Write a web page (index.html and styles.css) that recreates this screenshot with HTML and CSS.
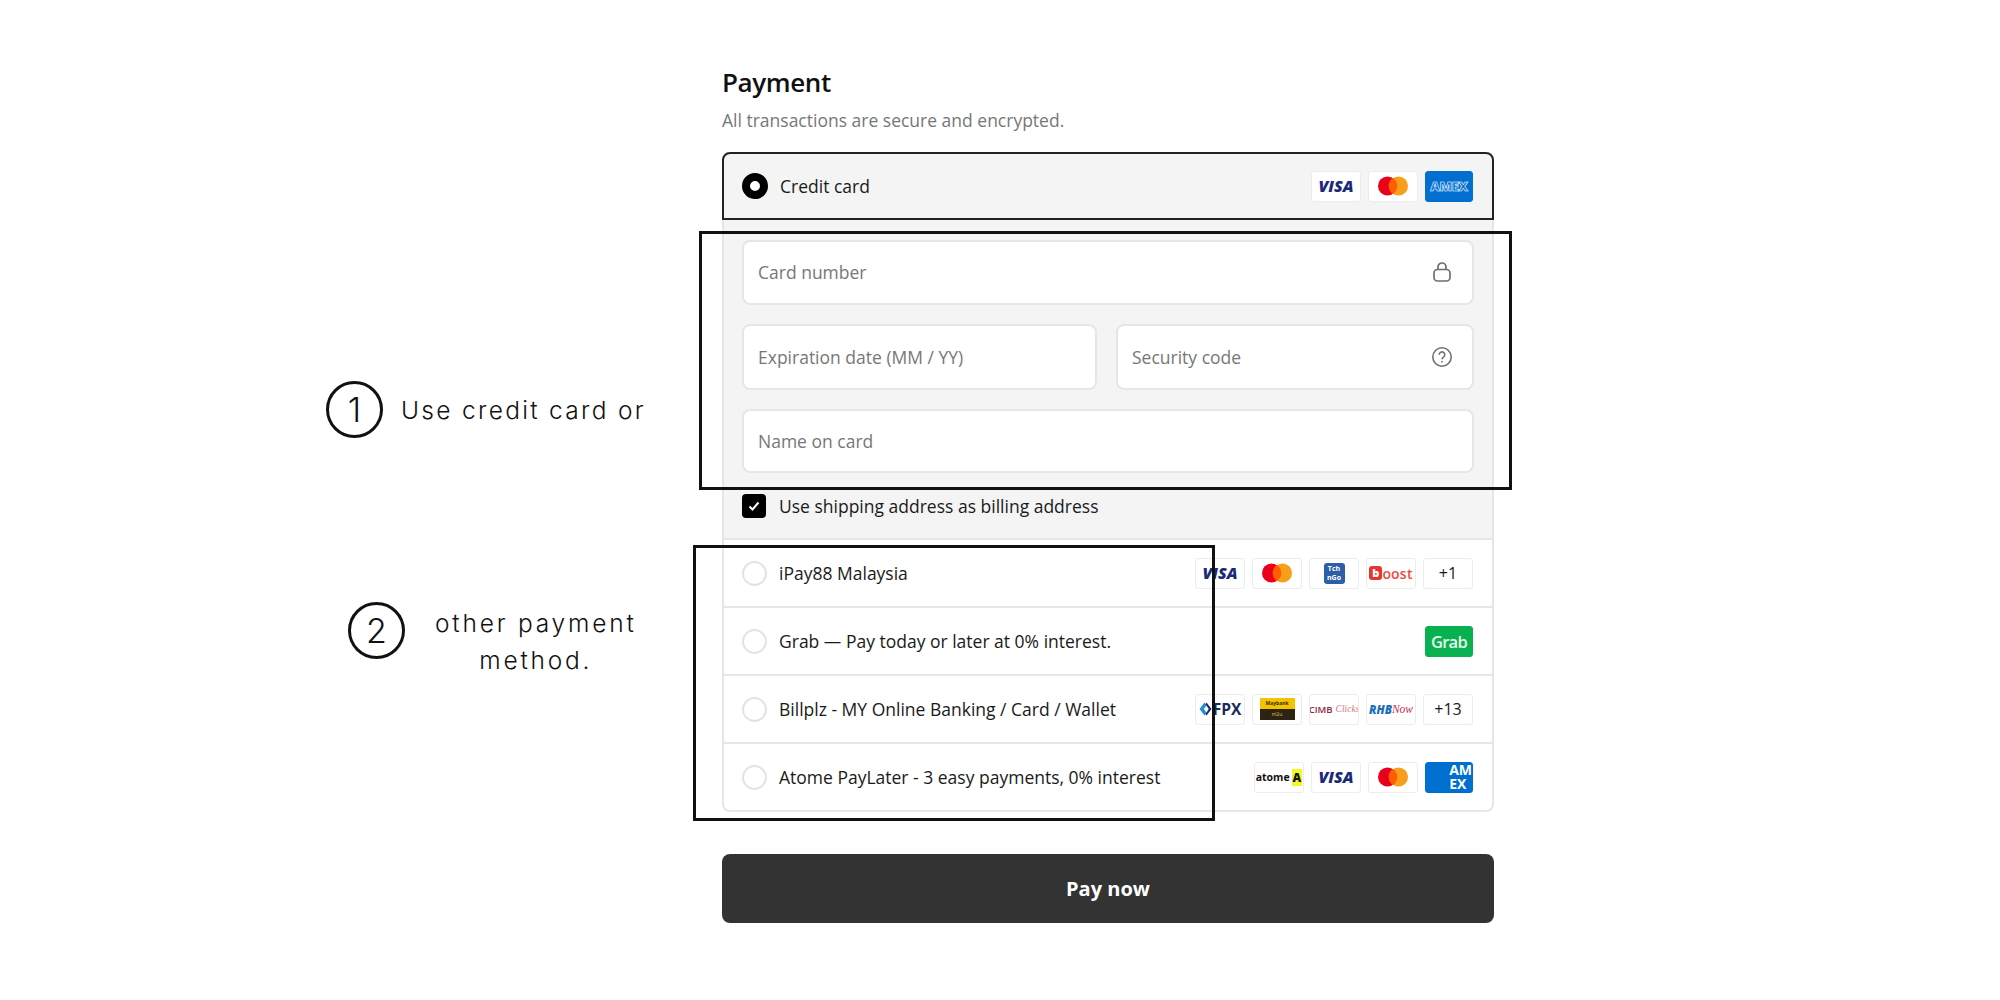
FILE: index.html
```html
<!DOCTYPE html>
<html lang="en">
<head>
    <meta charset="UTF-8">
    <title>Payment</title>
    <link rel="stylesheet" href="styles.css">
</head>
<body>

    <!-- Callouts beside the form -->
    <div class="note note-one">
        <span class="note-num">1</span>
        <p>Use credit card or</p>
    </div>
    <div class="note note-two">
        <span class="note-num">2</span>
        <p>other payment<br>method.</p>
    </div>

    <main class="checkout">
        <h2>Payment</h2>
        <p class="subtitle">All transactions are secure and encrypted.</p>

        <div class="methods">
            <div class="method method-active">
                <span class="radio radio-on"></span>
                <span class="method-name">Credit card</span>
                <div class="badges">
                    <span class="badge visa">VISA</span>
                    <span class="badge"><svg class="mc" viewBox="0 0 30 20"><circle cx="9.5" cy="10" r="9.5" fill="#eb001b"/><circle cx="20.5" cy="10" r="9.5" fill="#f79e1b"/><path d="M15 2a9.5 9.5 0 0 1 0 16a9.5 9.5 0 0 1 0-16z" fill="#ff5f00"/></svg></span>
                    <span class="badge amex">AMEX</span>
                </div>
            </div>

            <div class="card-form">
                <div class="field">
                    <span>Card number</span>
                    <svg class="field-icon" viewBox="0 0 20 20" fill="none" stroke="#6f6f6f" stroke-width="1.7"><rect x="2" y="7.500" width="16" height="11.500" rx="3.500"/><path d="M6 7.500V5a4 4 0 0 1 8 0V7.500"/></svg>
                </div>
                <div class="field-row">
                    <div class="field"><span>Expiration date (MM / YY)</span></div>
                    <div class="field">
                        <span>Security code</span>
                        <svg class="field-icon" viewBox="0 0 20 20" fill="none" stroke="#6f6f6f" stroke-width="1.6"><circle cx="10" cy="10" r="9.200"/><path d="M7.200 7.800a2.800 2.800 0 1 1 4.300 2.300c-1 .6-1.500 1.100-1.500 2.200"/><path d="M10 14v1.600"/></svg>
                    </div>
                </div>
                <div class="field"><span>Name on card</span></div>
                <label class="billing">
                    <span class="checkbox"><svg viewBox="0 0 14 14" fill="none" stroke="#fff" stroke-width="2"><path d="M2.500 7.500l3 3l6-7"/></svg></span>
                    Use shipping address as billing address
                </label>
            </div>

            <div class="method">
                <span class="radio"></span>
                <span class="method-name">iPay88 Malaysia</span>
                <div class="badges">
                    <span class="badge visa">VISA</span>
                    <span class="badge"><svg class="mc" viewBox="0 0 30 20"><circle cx="9.500" cy="10" r="9.500" fill="#eb001b"/><circle cx="20.500" cy="10" r="9.500" fill="#f79e1b"/><path d="M15 2a9.500 9.500 0 0 1 0 16a9.500 9.500 0 0 1 0-16z" fill="#ff5f00"/></svg></span>
                    <span class="badge"><span class="tng">Tch<br>nGo</span></span>
                    <span class="badge boost"><span class="boost-b">b</span>oost</span>
                    <span class="badge more">+1</span>
                </div>
            </div>

            <div class="method">
                <span class="radio"></span>
                <span class="method-name">Grab — Pay today or later at 0% interest.</span>
                <div class="badges">
                    <span class="badge grab">Grab</span>
                </div>
            </div>

            <div class="method">
                <span class="radio"></span>
                <span class="method-name">Billplz - MY Online Banking / Card / Wallet</span>
                <div class="badges">
                    <span class="badge fpx"><svg viewBox="0 0 12 14"><path d="M5 1L0.500 7L5 13L7 10.500L4.500 7L7 3.500z" fill="#1f8fd6"/><path d="M7 1L11.500 7L7 13L6 11.500L9 7L6 2.500z" fill="#1b2a5c"/></svg>FPX</span>
                    <span class="badge"><span class="maybank"><b>Maybank</b><i>m2u</i></span></span>
                    <span class="badge cimb">CIMB <em>Clicks</em></span>
                    <span class="badge rhb"><b>RHB</b><em>Now</em></span>
                    <span class="badge more">+13</span>
                </div>
            </div>

            <div class="method method-last">
                <span class="radio"></span>
                <span class="method-name">Atome PayLater - 3 easy payments, 0% interest</span>
                <div class="badges">
                    <span class="badge atome">atome<span class="atome-a">A</span></span>
                    <span class="badge visa">VISA</span>
                    <span class="badge"><svg class="mc" viewBox="0 0 30 20"><circle cx="9.500" cy="10" r="9.500" fill="#eb001b"/><circle cx="20.500" cy="10" r="9.500" fill="#f79e1b"/><path d="M15 2a9.500 9.500 0 0 1 0 16a9.500 9.500 0 0 1 0-16z" fill="#ff5f00"/></svg></span>
                    <span class="badge amex-big"><span>AM<br>EX</span></span>
                </div>
            </div>
        </div>

        <button class="pay-btn">Pay now</button>
    </main>

    <!-- Marker boxes drawn over the form -->
    <div class="mark mark-one"></div>
    <div class="mark mark-two"></div>

</body>
</html>
```

FILE: styles.css
```css
body {
    font-family: "Open Sans", "Noto Sans", sans-serif;
    background-color: #fff;
    color: #1a1a1a;
    margin: 0;
    height: 1000px;
    overflow: hidden;
    position: relative;
}

/* callouts */
.note {
    position: absolute;
    display: flex;
    align-items: flex-start;
    font-family: Inter, sans-serif;
    font-weight: 300;
    font-size: 24.5px;
    line-height: 37px;
    letter-spacing: 2.3px;
    color: #111;
}

.note p {
    margin: 0;
    text-align: center;
}

.note-one {
    left: 326px;
    top: 381px;
    gap: 18px;
}

.note-one p {
    padding-top: 11px;
}

.note-two {
    left: 348px;
    top: 602px;
    gap: 30px;
}

.note-two p {
    padding-top: 3px;
    letter-spacing: 2.8px;
}

.note-num {
    width: 51px;
    height: 51px;
    border: 3px solid #111;
    border-radius: 50%;
    display: flex;
    align-items: center;
    justify-content: center;
    font-size: 34px;
    letter-spacing: 0;
}

/* marker boxes */
.mark {
    position: absolute;
    border: 3px solid #111;
    box-sizing: border-box;
}

.mark-one {
    left: 699px;
    top: 231px;
    width: 813px;
    height: 259px;
}

.mark-two {
    left: 693px;
    top: 545px;
    width: 522px;
    height: 276px;
}

/* form */
.checkout {
    width: 772px;
    margin-left: 722px;
    padding-top: 64px;
}

h2 {
    font-size: 26px;
    line-height: 36px;
    font-weight: 600;
    margin: 0;
    color: #111;
    letter-spacing: -0.4px;
}

.subtitle {
    font-size: 17.5px;
    line-height: 24px;
    margin: 8px 0 20px;
    color: #777;
}

.method {
    height: 68px;
    box-sizing: border-box;
    display: flex;
    align-items: center;
    padding: 0 19px 0 18px;
    border: 2px solid #e6e6e6;
    border-top: none;
    font-size: 17.5px;
}

.method-active {
    background-color: #f4f4f4;
    border: 2px solid #222;
    border-radius: 8px 8px 0 0;
}

.method-last {
    border-radius: 0 0 8px 8px;
}

.method-name {
    margin-left: 12px;
}

.radio {
    width: 21px;
    height: 21px;
    border: 2px solid #e3e3e3;
    border-radius: 50%;
    background: #fff;
    flex: none;
}

.radio-on {
    width: 10px;
    height: 10px;
    border: 8px solid #000;
}

.badges {
    margin-left: auto;
    display: flex;
    gap: 7px;
}

.badge {
    width: 50px;
    height: 31px;
    box-sizing: border-box;
    background: #fff;
    border: 1px solid #ececec;
    border-radius: 3px;
    display: flex;
    align-items: center;
    justify-content: center;
    font-size: 12px;
    overflow: hidden;
}

.mc {
    width: 30px;
    height: 20px;
}

.visa {
    color: #1a2a78;
    font-size: 16px;
    font-weight: 800;
    font-style: italic;
}

.amex {
    width: 48px;
    background: #016fd0;
    border-color: #016fd0;
    color: #016fd0;
    -webkit-text-stroke: 0.6px #fff;
    font-size: 13px;
    font-weight: 800;
    letter-spacing: -0.3px;
}

.amex-big {
    width: 48px;
    background: #016fd0;
    border-color: #016fd0;
    color: #fff;
    font-size: 14px;
    font-weight: 700;
    line-height: 14px;
    justify-content: flex-end;
    text-align: left;
    white-space: nowrap;
}

.more {
    font-size: 16px;
    font-weight: 500;
    color: #1a1a1a;
}

.tng {
    width: 21px;
    height: 21px;
    background: #2c5fa8;
    border-radius: 3px;
    color: #fff;
    font-size: 7px;
    line-height: 9px;
    padding-top: 1px;
    box-sizing: border-box;
    font-weight: 700;
    text-align: center;
}

.boost {
    color: #ea4a42;
    font-size: 14px;
    font-weight: 600;
    letter-spacing: 0.2px;
}

.boost-b {
    background: #e8362f;
    color: #fff;
    border-radius: 3px;
    width: 13px;
    height: 14px;
    line-height: 13px;
    text-align: center;
    font-size: 11px;
    font-weight: 800;
}

.grab {
    width: 48px;
    background: #08b14f;
    border-color: #08b14f;
    color: #e6f8ed;
    font-size: 16.5px;
    font-weight: 600;
    letter-spacing: -0.7px;
}

.fpx {
    color: #1b2a5c;
    font-size: 15.5px;
    font-weight: 700;
    gap: 1px;
}

.fpx svg {
    width: 13px;
    height: 16px;
}

.maybank {
    width: 35px;
    height: 22px;
    display: flex;
    flex-direction: column;
    font-size: 5px;
    line-height: 11px;
    text-align: center;
}

.maybank b {
    background: #f5c400;
    color: #3a2d00;
}

.maybank i {
    background: #2b2413;
    color: #e6c24a;
    font-style: normal;
}

.cimb {
    color: #8e2a3c;
    font-size: 9.5px;
    font-weight: 600;
    gap: 3px;
    white-space: nowrap;
}

.cimb em {
    color: #d9747e;
    font-family: "Liberation Serif", serif;
    font-weight: 400;
}

.rhb {
    color: #1c6fb8;
    font-size: 11.5px;
    font-weight: 800;
    font-style: italic;
    white-space: nowrap;
}

.rhb em {
    color: #c4304a;
    font-family: "Liberation Serif", serif;
    font-weight: 400;
}

.atome {
    color: #111;
    font-size: 10.5px;
    font-weight: 700;
    gap: 2px;
}

.atome-a {
    background: #f0f721;
    padding: 0 1px;
    font-size: 12px;
    font-weight: 800;
}

.card-form {
    background-color: #f4f4f4;
    border: 2px solid #e6e6e6;
    border-top: none;
    padding: 20px 18px;
    height: 320px;
    box-sizing: border-box;
    display: flex;
    flex-direction: column;
    gap: 19px;
}

.field-row {
    display: grid;
    grid-template-columns: 355px 358px;
    gap: 19px;
}

.field {
    height: 66px;
    box-sizing: border-box;
    background: #fff;
    border: 2px solid #e6e6e6;
    border-radius: 8px;
    padding: 0 14px;
    display: flex;
    align-items: center;
    justify-content: space-between;
    font-size: 17.5px;
    color: #777;
}

.field-icon {
    width: 20px;
    height: 20px;
    margin-right: 6px;
}

.billing {
    display: flex;
    align-items: center;
    gap: 13px;
    font-size: 17.5px;
    margin-top: 2px;
}

.checkbox {
    width: 24px;
    height: 24px;
    background: #000;
    border-radius: 4px;
    display: flex;
    align-items: center;
    justify-content: center;
}

.checkbox svg {
    width: 14px;
    height: 14px;
}

.pay-btn {
    display: block;
    width: 100%;
    height: 69px;
    margin-top: 42px;
    background-color: #333;
    color: white;
    border: none;
    border-radius: 8px;
    font-family: inherit;
    font-size: 20px;
    font-weight: 700;
}
```
